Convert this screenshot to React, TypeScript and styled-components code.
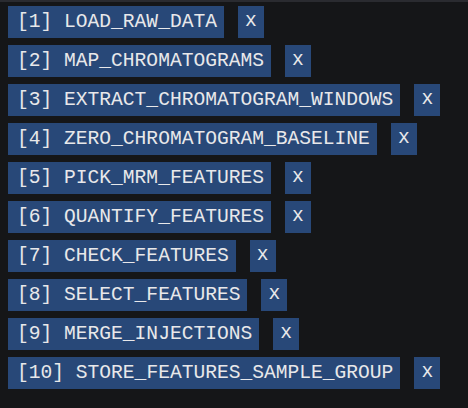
import React from 'react'
import styled, { createGlobalStyle } from 'styled-components'

const GlobalStyle = createGlobalStyle`
    html, body {
        margin: 0;
        padding: 0;
        background: #151618;
    }
`

const Panel = styled.div`
    width: 468px;
    height: 408px;
    box-sizing: border-box;
    background: #151618;
    border-top: 2px solid #2a2b30;
    padding: 4px 0 0 8px;
    display: flex;
    flex-direction: column;
    gap: 7px;
    font-family: "Liberation Mono", "DejaVu Sans Mono", monospace;
    font-size: 19.6px;
    color: #e8e8ea;
`

const Row = styled.div`
    display: flex;
    align-items: center;
    gap: 14px;
`

const StepButton = styled.div`
    height: 32px;
    line-height: 32px;
    padding: 0 7px 0 9px;
    background: #284878;
    white-space: pre;
`

const RemoveButton = styled.div`
    height: 32px;
    line-height: 30px;
    width: 26px;
    text-align: center;
    background: #284878;
`

const steps = [
    'LOAD_RAW_DATA',
    'MAP_CHROMATOGRAMS',
    'EXTRACT_CHROMATOGRAM_WINDOWS',
    'ZERO_CHROMATOGRAM_BASELINE',
    'PICK_MRM_FEATURES',
    'QUANTIFY_FEATURES',
    'CHECK_FEATURES',
    'SELECT_FEATURES',
    'MERGE_INJECTIONS',
    'STORE_FEATURES_SAMPLE_GROUP',
]

const App: React.FC = () => {
    return (
        <>
            <GlobalStyle />
            <Panel>
                {steps.map((name, i) => (
                    <Row key={name}>
                        <StepButton>[{i + 1}] {name}</StepButton>
                        <RemoveButton>x</RemoveButton>
                    </Row>
                ))}
            </Panel>
        </>
    )
}

export default App
